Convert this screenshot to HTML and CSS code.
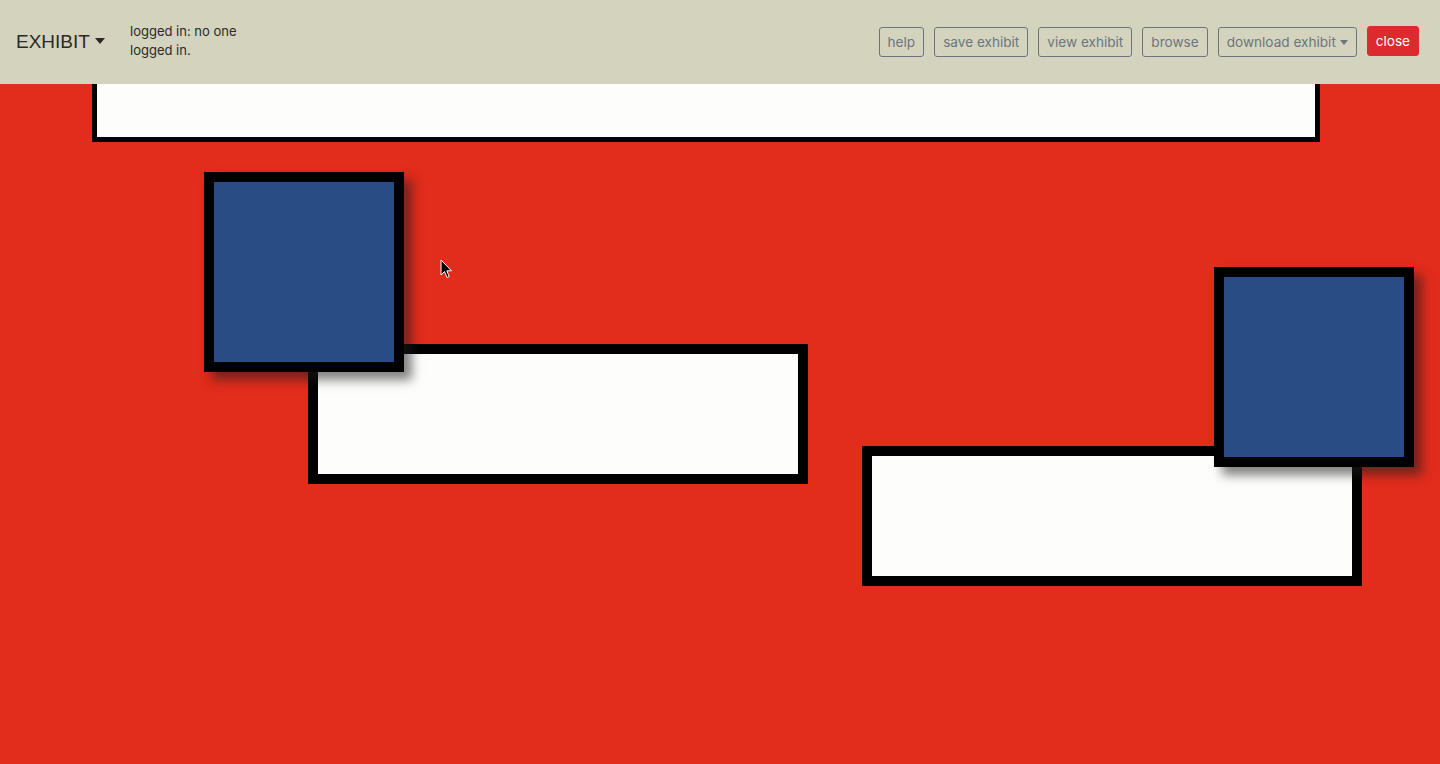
FILE: index.html
```html
<!DOCTYPE html>
<html lang="en">
<head>
<meta charset="utf-8">
<title>Exhibit</title>
<link rel="stylesheet" href="styles.css">
</head>
<body>
<header class="navbar">
  <div class="brand">EXHIBIT <span class="caret"></span></div>
  <div class="login">logged in: no one<br>logged in.</div>
  <nav class="actions">
    <button class="btn">help</button>
    <button class="btn">save exhibit</button>
    <button class="btn">view exhibit</button>
    <button class="btn">browse</button>
    <button class="btn">download exhibit <span class="caret small"></span></button>
    <button class="btn danger">close</button>
  </nav>
</header>
<main class="canvas">
  <div class="shape plate top-plate"></div>
  <div class="shape plate plate-a"></div>
  <div class="shape plate plate-b"></div>
  <div class="shape tile tile-a"></div>
  <div class="shape tile tile-b"></div>
  <svg class="cursor" width="13" height="20" viewBox="0 0 13 20">
    <path d="M1 1 L1 16 L4.5 12.5 L7 18.5 L9.2 17.6 L6.8 11.8 L11.5 11.8 Z" fill="#000" stroke="#fff" stroke-width="1" stroke-linejoin="round"/>
  </svg>
</main>
</body>
</html>
```
FILE: styles.css
```css
* { box-sizing: border-box; }
html, body {
  margin: 0;
  height: 100%;
}
body {
  font-family: "Liberation Sans", Arial, Helvetica, sans-serif;
  background: #e22c1c;
  overflow: hidden;
  display: flex;
  flex-direction: column;
}
.navbar {
  height: 84px;
  flex: 0 0 84px;
  background: #d4d3bd;
  display: flex;
  align-items: center;
  padding: 0 21px 0 16px;
  position: relative;
  z-index: 10;
}
.brand {
  font-size: 19px;
  color: #2a2a2a;
  display: flex;
  align-items: center;
  gap: 1px;
  width: 114px;
  margin-top: -1px;
}
.caret {
  display: inline-block;
  width: 0;
  height: 0;
  border-left: 5px solid transparent;
  border-right: 5px solid transparent;
  border-top: 6px solid #2a2a2a;
  margin-left: 4px;
  margin-top: -2px;
}
.caret.small {
  border-left-width: 4px;
  border-right-width: 4px;
  border-top-width: 5px;
  border-top-color: #6c757d;
  margin-left: 0;
  vertical-align: middle;
}
.login {
  font-family: Inter, "Liberation Sans", sans-serif;
  font-size: 13px;
  line-height: 19px;
  color: #2a2a2a;
  margin-top: -2px;
}
.actions {
  margin-left: auto;
  display: flex;
  gap: 10px;
  align-items: center;
}
.btn {
  font-family: Inter, "Liberation Sans", sans-serif;
  font-size: 13.6px;
  line-height: 20px;
  height: 30px;
  padding: 4px 8px;
  border: 1px solid #6c757d;
  border-radius: 3px;
  background: transparent;
  color: #6c757d;
  white-space: nowrap;
}
.btn.danger {
  background: #dc2a2e;
  border-color: #dc2a2e;
  color: #fff;
  margin-top: -2px;
}
.canvas {
  position: relative;
  flex: 1;
  overflow: hidden;
}
.shape { position: absolute; }
.plate {
  background: #fdfdfb;
  border: 10px solid #000;
  width: 500px;
  height: 140px;
}
.top-plate {
  left: 92px;
  top: -40px;
  width: 1228px;
  height: 98px;
  border-width: 5px;
}
.plate-a { left: 308px; top: 260px; }
.plate-b { left: 862px; top: 362px; }
.tile {
  width: 200px;
  height: 200px;
  background: #2a4c84;
  border: 10px solid #000;
  box-shadow: 8px 8px 10px rgba(30, 30, 30, 0.55);
}
.tile-a { left: 204px; top: 88px; }
.tile-b { left: 1214px; top: 183px; }
.cursor {
  position: absolute;
  left: 440px;
  top: 175px;
}
```
